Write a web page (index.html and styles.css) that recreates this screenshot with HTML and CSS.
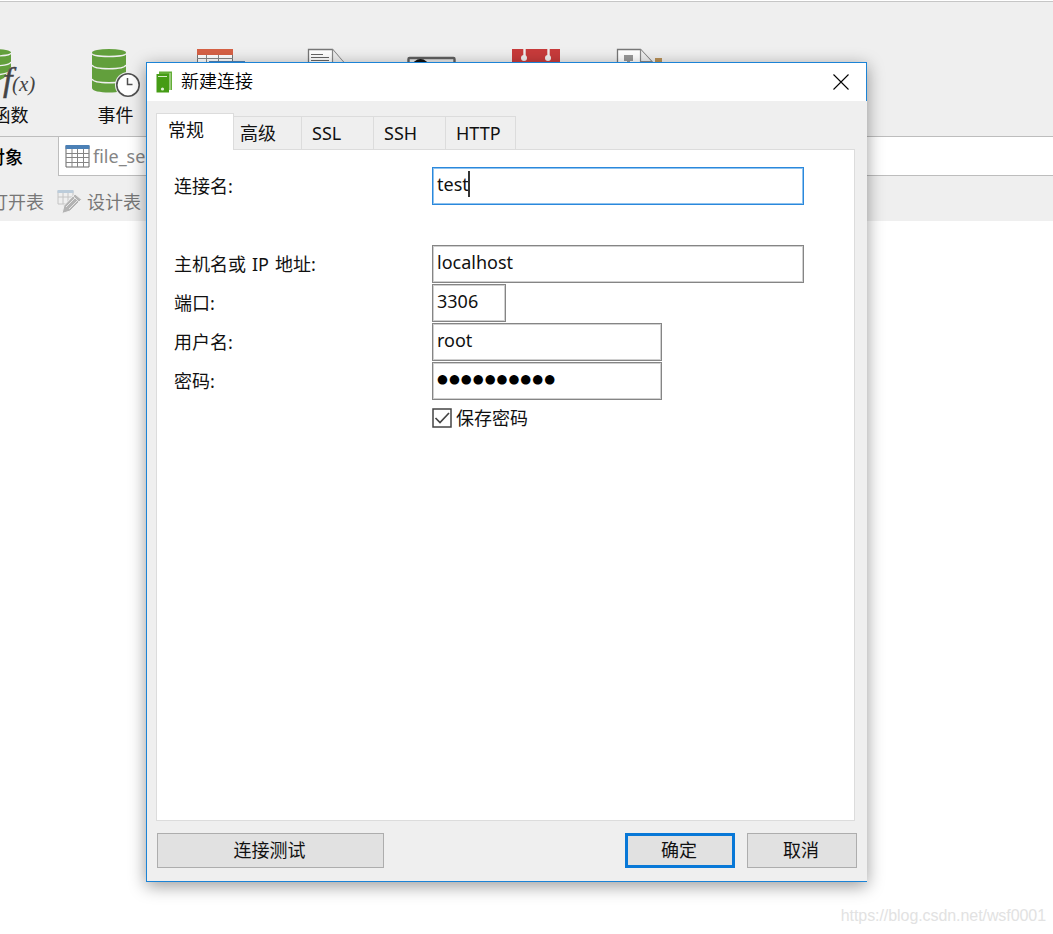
FILE: index.html
```html
<!DOCTYPE html>
<html lang="zh-CN">
<head>
<meta charset="utf-8">
<title>新建连接</title>
<link rel="stylesheet" href="styles.css">
</head>
<body>
<div class="app">
  <div class="toolbar">
    <div class="tool">
      <svg class="tool-icon" width="60" height="54" viewBox="0 0 60 54">
        <g fill="#629f3c"><path d="M-3 8v26c0 3 8 4 17 4l10-5 7-11V8z"/><ellipse cx="14" cy="7.500" rx="17" ry="3.500"/></g>
        <g fill="none" stroke="#efefef" stroke-width="1.400"><path d="M-3 8c0 4 34 4 34 0M-3 18c2 4 32 4 34 -1M-3 28c2 4 26 3 34-2"/></g>
        <text class="fx-f" x="23" y="46">f</text><text class="fx-x" x="32" y="46">(x)</text>
      </svg>
      <span>函数</span>
    </div>
    <div class="tool">
      <svg class="tool-icon" width="60" height="54" viewBox="0 0 60 54">
        <g fill="#629f3c"><path d="M7 8v35c0 3 8 4.500 17 4.500S41 46 41 43V8z"/><ellipse cx="24" cy="7.500" rx="17" ry="3.500"/></g>
        <g fill="none" stroke="#efefef" stroke-width="1.400"><path d="M7 8.500c0 4 34 4 34 0M7 20c2 5 32 5 34 0M7 34c2 5 32 5 34 0"/></g>
        <circle cx="43" cy="40" r="13" fill="#efefef"/><circle cx="43" cy="40" r="11.200" fill="#fff" stroke="#505050" stroke-width="1.600"/>
        <path d="M42.500 33v6.500h5" fill="none" stroke="#505050" stroke-width="1.500"/>
      </svg>
      <span>事件</span>
    </div>
    <div class="tool">
      <svg class="tool-icon" width="60" height="54" viewBox="0 0 60 54">
        <path d="M7.500 5h35v30h-35z" fill="#fff" stroke="#777"/><path d="M7 13.500h36M16.500 8v26M28.500 8v26" stroke="#888" fill="none"/>
        <path d="M7 4h36v6H7z" fill="#d66145"/><path d="M19 16h36v20H19z" fill="#4e83b8"/>
      </svg>
    </div>
    <div class="tool">
      <svg class="tool-icon" width="60" height="54" viewBox="0 0 60 54">
        <path d="M13.500 4.500h24l12 14V40h-36z" fill="#fff" stroke="#777" stroke-width="1.300"/><path d="M37.500 4.500v14h12" fill="#eee" stroke="#888" stroke-width="1.200"/>
        <path d="M16 9.500h12M16 12.500h18M16 15.500h18M16 18.500h18" stroke="#666" stroke-width="1.100"/>
      </svg>
    </div>
    <div class="tool">
      <svg class="tool-icon" width="60" height="54" viewBox="0 0 60 54">
        <rect x="8.500" y="13" width="46" height="28" rx="1" fill="#e8e8e8" stroke="#606060" stroke-width="2.400"/><circle cx="20.500" cy="22" r="8" fill="#111"/>
      </svg>
    </div>
    <div class="tool">
      <svg class="tool-icon" width="60" height="54" viewBox="0 0 60 54">
        <path d="M7 4h48v35H7z" fill="#c83b3b"/><path d="M19.500 4v9M43.500 4v9" stroke="#efefef" stroke-width="2.400"/><circle cx="19" cy="13" r="3" fill="#efefef"/><circle cx="43" cy="13" r="3" fill="#efefef"/>
      </svg>
    </div>
    <div class="tool">
      <svg class="tool-icon" width="60" height="54" viewBox="0 0 60 54">
        <path d="M7.500 4.500h23l14 15V40h-37z" fill="#fff" stroke="#777" stroke-width="1.300"/><path d="M30.500 4.500v12h11" fill="#eee" stroke="#888" stroke-width="1.200"/>
        <path d="M14 10h9v6h-3v4h-3v-4h-3z" fill="#999"/><path d="M45 13h7v7h-7z" fill="#b89057"/>
      </svg>
    </div>
  </div>
  <div class="doc-tabs">
    <div class="objects"><span>对象</span></div>
    <div class="file-tab">
      <svg width="25" height="24" viewBox="0 0 25 24"><path d="M1 2h23v21H1z" fill="#fff" stroke="#666"/><path d="M.5 1h24v4H.5z" fill="#4b80b6"/><path d="M1 9.500h23M1 13.500h23M1 18.500h23M7 5v18M12.500 5v18M18.500 5v18" stroke="#858585" fill="none"/></svg>
      <span>file_se</span>
    </div>
  </div>
  <div class="actions">
    <span class="open">打开表</span>
    <svg width="26" height="26" viewBox="0 0 26 26"><path d="M1 2h15v13H1zM1 8h15M6 4v11M11 4v11" fill="none" stroke="#c4c4c4"/><path d="M.5 1h16v3H.5z" fill="#bcccda"/><path d="M5 24.500l2-8L18 5l6.500 5.500L13 22z" fill="#b3b3b3" stroke="#efefef"/><path d="M9 18l9-9M12 20l9-9M16 7l6 6" stroke="#e5e5e5"/></svg>
    <span>设计表</span>
  </div>
  <div class="watermark">https://blog.csdn.net/wsf0001</div>
</div>
<div class="dialog">
  <div class="titlebar">
    <svg width="18" height="22" viewBox="0 0 18 22"><path d="M3 .5h13v18.500h-3V3H3z" fill="#63ae37"/><path d="M.5 3h12.500V21.500H.5z" fill="#459c15"/><path d="M14 2v17" stroke="#fff" stroke-width=".7"/><path d="M2 5.500h9" stroke="#d9edcb"/><circle cx="6.500" cy="18" r="1.600" fill="#e2f0da"/></svg>
    <span class="title">新建连接</span>
    <svg width="16" height="16" viewBox="0 0 16 16"><path d="M.5.500l15 15M15.500.500l-15 15" stroke="#000" stroke-width="1.100"/></svg>
  </div>
  <div class="content">
    <div class="tabs">
      <div class="tab active">常规</div><div class="tab t1">高级</div><div class="tab t2">SSL</div><div class="tab t2">SSH</div><div class="tab t3">HTTP</div>
    </div>
    <div class="panel">
      <div class="row first"><label>连接名:</label><div class="field wide focus">test<i class="caret"></i></div></div>
      <div class="row"><label>主机名或<span class="ip">IP</span>地址:</label><div class="field wide">localhost</div></div>
      <div class="row"><label>端口:</label><div class="field short">3306</div></div>
      <div class="row"><label>用户名:</label><div class="field">root</div></div>
      <div class="row"><label>密码:</label><div class="field dots">●●●●●●●●●●</div></div>
      <div class="check"><svg width="20" height="20" viewBox="0 0 20 20"><rect x="1" y="1" width="18" height="18" fill="#fff" stroke="#444" stroke-width="1.500"/><path d="M3.500 10l4.500 4.500 9-9.500" fill="none" stroke="#444" stroke-width="1.700"/></svg><span>保存密码</span></div>
    </div>
    <div class="buttons"><div class="btn test">连接测试</div><div class="btn ok">确定</div><div class="btn">取消</div></div>
  </div>
</div>
</body>
</html>
```
FILE: styles.css
```css
* { box-sizing: border-box; }
body {
  margin: 0;
  width: 1053px;
  height: 934px;
  overflow: hidden;
  position: relative;
  background: #fff;
  color: #111;
  font: 18px/24px "Noto Sans", "Noto Sans CJK SC", sans-serif;
  white-space: nowrap;
}
svg { display: block; flex: none; }
.app { height: 934px; display: flex; flex-direction: column; overflow: hidden; }
.toolbar {
  height: 136px;
  margin-top: 1px;
  flex: none;
  display: flex;
  padding-top: 43px;
  background: #efefef;
  border-top: 1px solid #c6c6c6;
  border-bottom: 1px solid #bdbdbd;
}
.tool { width: 105px; flex: none; display: flex; flex-direction: column; align-items: center; gap: 4px; }
.tool:first-child { margin-left: -42px; }
.tool-icon { margin-left: -1px; }
.fx-f { font: italic 34px "Liberation Serif", serif; fill: #444; stroke: #444; stroke-width: .5px; }
.fx-x { font: italic 21px "Liberation Serif", serif; fill: #444; }
.doc-tabs { height: 39px; flex: none; display: flex; }
.objects {
  width: 58px;
  display: flex;
  justify-content: flex-end;
  align-items: center;
  padding-right: 35px;
  background: #efefef;
  color: #000;
  font-weight: 500;
}
.file-tab {
  flex: 1;
  display: flex;
  align-items: center;
  gap: 3px;
  padding-left: 6px;
  background: #fff;
  border-left: 1px solid #bdbdbd;
  border-bottom: 1px solid #bdbdbd;
  color: #858585;
}
.actions {
  height: 45px;
  flex: none;
  display: flex;
  align-items: center;
  gap: 4px;
  padding-top: 7px;
  background: #efefef;
  color: #777;
}
.open { margin-left: -10px; margin-right: 9px; }
.watermark {
  margin: auto 7px 8px auto;
  font: 16px/20px "Liberation Sans", sans-serif;
  letter-spacing: -.07px;
  color: #e2e2e2;
}
.dialog {
  position: absolute;
  left: 146px;
  top: 62px;
  width: 721px;
  height: 820px;
  display: flex;
  flex-direction: column;
  background: #efefef;
  border: solid #1b83d6;
  border-width: 1px 0 1px 1px;
  box-shadow: 0 4px 16px rgba(0, 0, 0, .4);
}
.titlebar {
  height: 38px;
  flex: none;
  display: flex;
  align-items: center;
  padding: 0 17px 0 9px;
  background: #fff;
  border-right: 1px solid #1b83d6;
}
.title { flex: 1; margin: -2px 0 0 7px; font-weight: 350; color: #000; }
.content { flex: 1; padding: 12px 12px 13px 9px; display: flex; flex-direction: column; }
.tabs { height: 37px; margin-bottom: -1px; display: flex; align-items: flex-end; z-index: 1; }
.tab {
  height: 34px;
  padding: 4px 0 0 9px;
  border: 1px solid #dcdcdc;
  border-left: 0;
}
.active { width: 78px; height: 37px; padding: 4px 0 0 11px; background: #fff; border-left: 1px solid #dcdcdc; border-bottom: 0; }
.t1 { width: 68px; padding-left: 6px; }
.t2 { width: 72px; padding-left: 10px; }
.t3 { width: 70px; padding-left: 10px; }
.panel { width: 699px; height: 672px; padding: 17px 0 0 17px; background: #fff; border: 1px solid #dcdcdc; }
.row { height: 39px; display: flex; }
.first { height: 78px; }
.row label { width: 258px; padding-top: 7px; }
.ip { margin: 0 6px; }
.field {
  width: 230px;
  height: 38px;
  padding: 4px 0 0 4px;
  display: flex;
  border: 1px solid #858585;
  box-shadow: inset 0 0 0 1px #d0d0d0;
}
.wide { width: 372px; }
.short { width: 74px; }
.focus { border-color: #2a88dc; box-shadow: inset 0 0 0 1px #8fc2ee; }
.caret { width: 2px; height: 26px; margin: -1px 0 0 -1px; background: #333; }
.dots { font: 12.5px/24px "DejaVu Sans", sans-serif; letter-spacing: 1px; color: #000; }
.check { display: flex; align-items: center; gap: 4px; margin: 5px 0 0 258px; }
.buttons { display: flex; margin: 12px -2px 0 1px; }
.btn {
  width: 110px;
  height: 35px;
  padding: 4px 2px 0 0;
  text-align: center;
  background: #e1e1e1;
  border: 1px solid #adadad;
}
.test { width: 227px; margin-right: auto; }
.ok { margin-right: 12px; padding-top: 2px; border: 3px solid #0878d7; }
```
